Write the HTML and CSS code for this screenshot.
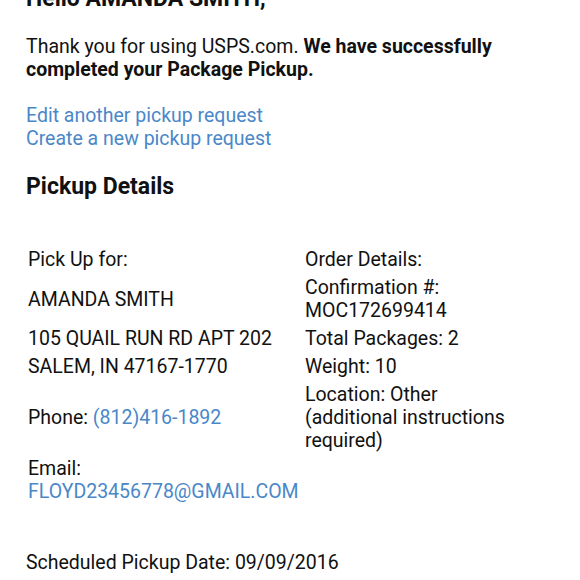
FILE: index.html
```html
<!DOCTYPE html>
<html>
<head>
<meta charset="utf-8">
<link rel="stylesheet" href="styles.css">
</head>
<body>
<div class="page">
  <h1 class="hello">Hello AMANDA SMITH,</h1>
  <p class="intro">Thank you for using USPS.com. <b>We have successfully completed your Package Pickup.</b></p>
  <div class="links">
    <a href="#">Edit another pickup request</a>
    <a href="#">Create a new pickup request</a>
  </div>
  <h2 class="section">Pickup Details</h2>
  <table class="details">
    <tr><td class="left">Pick Up for:</td><td>Order Details:</td></tr>
    <tr><td class="left">AMANDA SMITH</td><td>Confirmation #:<br>MOC172699414</td></tr>
    <tr><td class="left">105 QUAIL RUN RD APT 202</td><td>Total Packages: 2</td></tr>
    <tr><td class="left">SALEM, IN 47167-1770</td><td>Weight: 10</td></tr>
    <tr><td class="left">Phone: <a href="#">(812)416-1892</a></td><td>Location: Other<br>(additional instructions<br>required)</td></tr>
    <tr><td class="left">Email:<br><a href="#">FLOYD23456778@GMAIL.COM</a></td><td></td></tr>
  </table>
  <p class="date">Scheduled Pickup Date: 09/09/2016</p>
</div>
</body>
</html>
```
FILE: styles.css
```css
html, body {
  margin: 0;
  padding: 0;
  background: #ffffff;
}
body {
  font-family: Roboto, "Noto Sans", sans-serif;
  color: #111111;
  font-size: 19.5px;
  line-height: 23px;
}
.page {
  padding: 0 26px;
}
a {
  color: #4a87c9;
  text-decoration: none;
}
.hello {
  margin: -14px 0 0 0;
  font-size: 23px;
  line-height: 26px;
  font-weight: 700;
}
.intro {
  margin: 23px 0 0 0;
}
.intro b {
  font-weight: 700;
}
.links {
  margin-top: 23px;
  display: flex;
  flex-direction: column;
}
.section {
  margin: 24px 0 0 0;
  font-size: 23px;
  line-height: 25px;
  font-weight: 700;
}
.details {
  margin-top: 46px;
  border-collapse: separate;
  border-spacing: 0 1px;
  font-size: 19.5px;
  line-height: 23px;
}
.details td {
  padding: 2px;
  vertical-align: middle;
}
.details td.left {
  width: 273px;
}
.date {
  margin: 45px 0 0 0;
  font-size: 19.5px;
  line-height: 23px;
}
```
